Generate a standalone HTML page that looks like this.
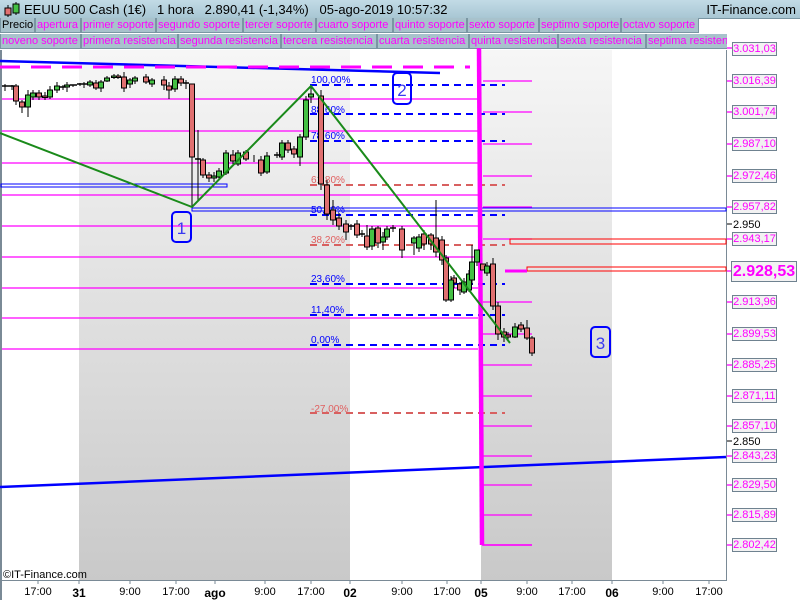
<!DOCTYPE html>
<html><head><meta charset="utf-8"><style>
body{margin:0;width:800px;height:600px;overflow:hidden;background:#fff;font-family:"Liberation Sans",sans-serif}
#hdr{position:absolute;left:0;top:0;width:800px;height:18px;background:linear-gradient(#c2dbe6,#a8c6d3);border-bottom:1px solid #7a96a3}
#hdr .t{position:absolute;left:24px;top:2px;font-size:13px;color:#000;white-space:pre}
#hdr .r{position:absolute;right:4px;top:2px;font-size:13px}
.row{position:absolute;left:0;height:16px;font-size:11px;white-space:nowrap}
.row span{position:absolute;top:0;height:15px;line-height:15px;background:#a8c2cc;border:1px solid #7a96a3;border-top:none;color:#f0f;padding-left:1px;box-sizing:border-box}
.lab{position:absolute;left:732px;width:45px;height:14px;border:1px solid #6f8290;background:#f2f2f2;color:#f0f;font-size:11px;line-height:13px;text-align:center;box-sizing:border-box}
.ax{position:absolute;top:586px;font-size:11px;transform:translateX(-50%)}
.axb{font-weight:bold;font-size:12px}
</style></head><body>
<div id="hdr"><svg style="position:absolute;left:3px;top:1px" width="18" height="17"><line x1="5" y1="4" x2="5" y2="16" stroke="#000"/><rect x="2" y="7" width="6" height="7" fill="#e07070" stroke="#000"/><line x1="13" y1="1" x2="13" y2="14" stroke="#000"/><rect x="10" y="3" width="6" height="9" fill="#44c044" stroke="#000"/></svg><div class="t">EEUU 500 Cash (1€)   1 hora   2.890,41 (-1,34%)   05-ago-2019 10:57:32</div><div class="r">IT-Finance.com</div></div>
<div class="row" style="top:18px;width:800px">
<span style="left:0;width:35px;color:#000">Precio</span><span style="left:35px;width:46px">apertura</span><span style="left:81px;width:75px">primer soporte</span><span style="left:156px;width:87px">segundo soporte</span><span style="left:243px;width:73px">tercer soporte</span><span style="left:316px;width:77px">cuarto soporte</span><span style="left:393px;width:74px">quinto soporte</span><span style="left:467px;width:72px">sexto soporte</span><span style="left:539px;width:82px">septimo soporte</span><span style="left:621px;width:78px">octavo soporte</span></div>
<div class="row" style="top:34px;width:727px;overflow:hidden">
<span style="left:0;width:81px">noveno soporte</span><span style="left:81px;width:97px">primera resistencia</span><span style="left:178px;width:103px">segunda resistencia</span><span style="left:281px;width:96px">tercera resistencia</span><span style="left:377px;width:92px">cuarta resistencia</span><span style="left:469px;width:89px">quinta resistencia</span><span style="left:558px;width:88px">sexta resistencia</span><span style="left:646px;width:90px">septima resistencia</span></div>
<svg style="position:absolute;left:0;top:0" width="800" height="600">
<defs><linearGradient id="g" x1="0" y1="0" x2="0" y2="1"><stop offset="0" stop-color="#f6f6f6"/><stop offset="1" stop-color="#c9c9c9"/></linearGradient></defs>
<rect x="79" y="50" width="271" height="530" fill="url(#g)"/>
<rect x="481" y="50" width="131" height="530" fill="url(#g)"/>
<rect x="0" y="50" width="2" height="550" fill="#7a8a96"/>
<line x1="726.5" y1="50" x2="726.5" y2="580" stroke="#7a8a96"/>
<line x1="0" y1="580.5" x2="727" y2="580.5" stroke="#7a8a96"/>
<g stroke="#7a8a96">
<line x1="38" y1="580" x2="38" y2="584"/><line x1="79" y1="580" x2="79" y2="584"/><line x1="130" y1="580" x2="130" y2="584"/><line x1="176" y1="580" x2="176" y2="584"/><line x1="215" y1="580" x2="215" y2="584"/><line x1="265" y1="580" x2="265" y2="584"/><line x1="311" y1="580" x2="311" y2="584"/><line x1="350" y1="580" x2="350" y2="584"/><line x1="402" y1="580" x2="402" y2="584"/><line x1="447" y1="580" x2="447" y2="584"/><line x1="481" y1="580" x2="481" y2="584"/><line x1="527" y1="580" x2="527" y2="584"/><line x1="572" y1="580" x2="572" y2="584"/><line x1="612" y1="580" x2="612" y2="584"/><line x1="663" y1="580" x2="663" y2="584"/><line x1="709" y1="580" x2="709" y2="584"/>
</g>
<g stroke="#f0f" stroke-width="1.3">
<line x1="2" y1="99" x2="478" y2="99"/><line x1="2" y1="131" x2="478" y2="131"/><line x1="2" y1="163" x2="478" y2="163"/><line x1="2" y1="195" x2="478" y2="195"/><line x1="2" y1="226" x2="478" y2="226"/><line x1="2" y1="257" x2="478" y2="257"/><line x1="2" y1="288" x2="478" y2="288"/><line x1="2" y1="318" x2="478" y2="318"/><line x1="2" y1="349" x2="478" y2="349"/>
<line x1="483" y1="81" x2="532" y2="81"/><line x1="483" y1="112" x2="532" y2="112"/><line x1="483" y1="144" x2="532" y2="144"/><line x1="483" y1="176" x2="532" y2="176"/><line x1="483" y1="207" x2="532" y2="207"/><line x1="483" y1="239" x2="532" y2="239"/><line x1="483" y1="302" x2="532" y2="302"/><line x1="483" y1="334" x2="532" y2="334"/><line x1="483" y1="365" x2="532" y2="365"/><line x1="483" y1="396" x2="532" y2="396"/><line x1="483" y1="426" x2="532" y2="426"/><line x1="483" y1="456" x2="532" y2="456"/><line x1="483" y1="485" x2="532" y2="485"/><line x1="483" y1="515" x2="532" y2="515"/><line x1="483" y1="545" x2="532" y2="545"/>
<line x1="727" y1="48" x2="732" y2="48"/><line x1="727" y1="81" x2="732" y2="81"/><line x1="727" y1="112" x2="732" y2="112"/><line x1="727" y1="144" x2="732" y2="144"/><line x1="727" y1="176" x2="732" y2="176"/><line x1="727" y1="207" x2="732" y2="207"/><line x1="727" y1="239" x2="732" y2="239"/><line x1="727" y1="271" x2="732" y2="271"/><line x1="727" y1="302" x2="732" y2="302"/><line x1="727" y1="334" x2="732" y2="334"/><line x1="727" y1="365" x2="732" y2="365"/><line x1="727" y1="396" x2="732" y2="396"/><line x1="727" y1="426" x2="732" y2="426"/><line x1="727" y1="456" x2="732" y2="456"/><line x1="727" y1="485" x2="732" y2="485"/><line x1="727" y1="515" x2="732" y2="515"/><line x1="727" y1="545" x2="732" y2="545"/>
</g>
<g stroke="#000"><line x1="727" y1="224" x2="732" y2="224"/><line x1="727" y1="441" x2="732" y2="441"/></g>
<g stroke-width="2" stroke-dasharray="7,5">
<line x1="310" y1="85" x2="505" y2="85" stroke="#00f"/><line x1="310" y1="114" x2="505" y2="114" stroke="#00f"/><line x1="310" y1="141" x2="505" y2="141" stroke="#00f"/><line x1="310" y1="185" x2="505" y2="185" stroke="#d86060"/><line x1="310" y1="215" x2="505" y2="215" stroke="#00f"/><line x1="310" y1="245" x2="505" y2="245" stroke="#d86060"/><line x1="310" y1="284" x2="505" y2="284" stroke="#00f"/><line x1="310" y1="315" x2="505" y2="315" stroke="#00f"/><line x1="310" y1="345" x2="505" y2="345" stroke="#00f"/><line x1="310" y1="413" x2="505" y2="413" stroke="#d86060"/>
</g>
<g font-size="10" font-family="Liberation Sans,sans-serif">
<text x="311" y="83" fill="#00f">100,00%</text><text x="311" y="113" fill="#00f">88,60%</text><text x="311" y="139" fill="#00f">78,60%</text><text x="311" y="183" fill="#e06060">61,80%</text><text x="311" y="213" fill="#00f">50,00%</text><text x="311" y="243" fill="#e06060">38,20%</text><text x="311" y="282" fill="#00f">23,60%</text><text x="311" y="313" fill="#00f">11,40%</text><text x="311" y="343" fill="#00f">0,00%</text><text x="311" y="412" fill="#e06060">-27,00%</text>
</g>
<line x1="0" y1="61" x2="440" y2="73" stroke="#00f" stroke-width="2.5"/>
<line x1="0" y1="67" x2="470" y2="67" stroke="#f0f" stroke-width="3" stroke-dasharray="20,11"/>
<line x1="0" y1="487" x2="726" y2="457" stroke="#00f" stroke-width="2.5"/>
<rect x="1" y="184" width="226" height="3" fill="none" stroke="#00f" stroke-width="1"/>
<rect x="192" y="208" width="534" height="3" fill="none" stroke="#00f" stroke-width="1"/>
<rect x="510" y="239" width="216" height="5" fill="none" stroke="#f00" stroke-width="1"/>
<rect x="527" y="267" width="199" height="4" fill="none" stroke="#f00" stroke-width="1"/>
<line x1="505" y1="271" x2="527" y2="271" stroke="#f0f" stroke-width="3"/>
<line x1="479" y1="48" x2="482" y2="545" stroke="#f0f" stroke-width="4.5"/>
<line x1="482" y1="545" x2="532" y2="545" stroke="#f0f" stroke-width="1.5"/>
<g stroke="#000" stroke-width="1">
<path d="M5 84V91M12 85V90M16 84V105M22 100V113M28 90V117M33 90V100M39 90V100M45 92V100M50 86V99M57 82V93M63 85V90M67 82V92M73 85V87M80 83V86M84 82V88M90 80V87M96 80V90M101 80V92M107 76V82M114 74V79M118 74V79M124 72V92M130 78V88M135 76V84M146 74V84M152 78V87M164 76V90M169 82V99M175 76V92M181 76V86M186 80V89M192 84V207M198 130V200M203 158V178M209 172V182M214 172V182M219 168V180M226 150V175M233 150V164M238 150V166M246 150V161M254 155V162M261 156V176M267 152V174M277 152V158M282 140V160M288 140V153M294 146V158M300 134V166M306 96V140M311 85V103M321 90V190M327 180V220M333 200V225M339 213V230M346 220V240M351 224V230M357 220V238M362 230V237M367 225V250M372 226V250M378 226V248M383 232V250M387 226V240M393 225V232M402 226V258M414 236V255M419 234V252M424 230V250M431 233V250M436 200V257M442 236V265M446 255V302M451 276V302M454 275V288M460 282V295M464 278V294M469 270V292M472 245V285M477 250V266M487 262V276M493 258V310M498 302V340M504 328V342M508 332V340M515 323V338M521 322V332M527 320V340M532 336V356"/>
</g>
<g stroke="#000" stroke-width="1" fill="#e07070">
<rect x="13.5" y="86" width="5" height="15"/><rect x="19.5" y="102" width="5" height="5"/><rect x="36.5" y="93" width="5" height="4"/><rect x="42.5" y="96" width="5" height="1.5"/><rect x="93.5" y="83" width="5" height="5"/><rect x="115.5" y="76" width="5" height="1.5"/><rect x="121.5" y="77" width="5" height="11"/><rect x="143.5" y="77" width="5" height="5"/><rect x="161.5" y="80" width="5" height="5"/><rect x="166.5" y="86" width="5" height="4"/><rect x="178.5" y="79" width="5" height="4"/><rect x="189.5" y="84" width="5" height="73"/><rect x="200.5" y="160" width="5" height="15"/><rect x="206.5" y="175" width="5" height="3"/><rect x="230.5" y="155" width="5" height="6"/><rect x="243.5" y="152" width="5" height="7"/><rect x="258.5" y="160" width="5" height="13"/><rect x="285.5" y="143" width="5" height="7"/><rect x="291.5" y="149" width="5" height="5"/><rect x="318.5" y="96" width="5" height="88"/><rect x="324.5" y="185" width="5" height="29"/><rect x="330.5" y="210" width="5" height="10"/><rect x="336.5" y="218" width="5" height="8"/><rect x="343.5" y="224" width="5" height="8"/><rect x="354.5" y="224" width="5" height="11"/><rect x="364.5" y="236" width="5" height="11"/><rect x="375.5" y="228" width="5" height="15"/><rect x="399.5" y="229" width="5" height="21"/><rect x="421.5" y="234" width="5" height="10"/><rect x="428.5" y="235" width="5" height="9"/><rect x="433.5" y="238" width="5" height="14"/><rect x="439.5" y="240" width="5" height="20"/><rect x="443.5" y="258" width="5" height="42"/><rect x="451.5" y="278" width="5" height="5"/><rect x="457.5" y="284" width="5" height="6"/><rect x="480.5" y="264" width="5" height="6"/><rect x="490.5" y="264" width="5" height="42"/><rect x="495.5" y="306" width="5" height="28"/><rect x="501.5" y="332" width="5" height="5"/><rect x="505.5" y="335" width="5" height="2"/><rect x="518.5" y="325" width="5" height="4"/><rect x="524.5" y="328" width="5" height="10"/><rect x="529.5" y="338" width="5" height="15"/>
</g>
<g stroke="#000" stroke-width="1" fill="#44c044">
<rect x="25.5" y="95" width="5" height="12"/><rect x="30.5" y="93" width="5" height="4"/><rect x="47.5" y="90" width="5" height="7"/><rect x="54.5" y="86" width="5" height="4"/><rect x="64.5" y="85" width="5" height="2"/><rect x="87.5" y="82" width="5" height="3"/><rect x="98.5" y="82" width="5" height="6"/><rect x="104.5" y="78" width="5" height="3"/><rect x="111.5" y="76" width="5" height="1.5"/><rect x="127.5" y="80" width="5" height="4"/><rect x="132.5" y="78" width="5" height="3"/><rect x="149.5" y="80" width="5" height="4"/><rect x="172.5" y="79" width="5" height="10"/><rect x="211.5" y="176" width="5" height="2"/><rect x="216.5" y="171" width="5" height="6"/><rect x="223.5" y="153" width="5" height="20"/><rect x="235.5" y="153" width="5" height="11"/><rect x="264.5" y="156" width="5" height="16"/><rect x="279.5" y="143" width="5" height="14"/><rect x="297.5" y="137" width="5" height="20"/><rect x="303.5" y="100" width="5" height="37"/><rect x="308.5" y="94" width="5" height="3"/><rect x="369.5" y="229" width="5" height="17"/><rect x="380.5" y="237" width="5" height="5"/><rect x="384.5" y="229" width="5" height="8"/><rect x="411.5" y="238" width="5" height="5"/><rect x="416.5" y="237" width="5" height="11"/><rect x="448.5" y="280" width="5" height="20"/><rect x="461.5" y="282" width="5" height="10"/><rect x="466.5" y="274" width="5" height="16"/><rect x="469.5" y="262" width="5" height="18"/><rect x="474.5" y="250" width="5" height="12"/><rect x="484.5" y="266" width="5" height="7"/><rect x="512.5" y="327" width="5" height="10"/>
</g>
<g stroke="#000" stroke-width="1.5"><path d="M2 86H9M9 86H15M59 87H66M70 85H77M77 84H84M82 84H88M183 83H189M195 159H201M274 155H281M348 226H354M359 234H365M390 228H396"/></g>
<polyline points="0,133 192,207 311,86 510,343" fill="none" stroke="#1a8a1a" stroke-width="2"/>
<g fill="none" stroke="#00f" stroke-width="2"><rect x="172" y="212" width="19" height="30" rx="4"/><rect x="393" y="73" width="18" height="31" rx="4"/><rect x="591" y="327" width="19" height="30" rx="4"/></g>
<g fill="#3a3af0" font-size="17" font-family="Liberation Sans,sans-serif" text-anchor="middle"><text x="181.5" y="234">1</text><text x="402" y="96">2</text><text x="600.5" y="349">3</text></g>
<text x="3" y="578" font-size="11" font-family="Liberation Sans,sans-serif">©IT-Finance.com</text>
<text x="733" y="445" font-size="11" font-family="Liberation Sans,sans-serif">2.850</text>
<text x="733" y="228" font-size="11" font-family="Liberation Sans,sans-serif">2.950</text>
</svg>
<div class="lab" style="top:42px">3.031,03</div><div class="lab" style="top:74px">3.016,39</div><div class="lab" style="top:105px">3.001,74</div><div class="lab" style="top:137px">2.987,10</div><div class="lab" style="top:169px">2.972,46</div><div class="lab" style="top:200px">2.957,82</div><div class="lab" style="top:232px">2.943,17</div>
<div class="lab" style="top:261px;left:731px;width:66px;height:21px;font-size:16px;font-weight:bold;line-height:19px">2.928,53</div>
<div class="lab" style="top:295px">2.913,96</div><div class="lab" style="top:327px">2.899,53</div><div class="lab" style="top:358px">2.885,25</div><div class="lab" style="top:389px">2.871,11</div><div class="lab" style="top:419px">2.857,10</div><div class="lab" style="top:449px">2.843,23</div><div class="lab" style="top:478px">2.829,50</div><div class="lab" style="top:508px">2.815,89</div><div class="lab" style="top:538px">2.802,42</div>
<div class="ax" style="left:38px">17:00</div><div class="ax axb" style="left:79px">31</div><div class="ax" style="left:130px">9:00</div><div class="ax" style="left:176px">17:00</div><div class="ax axb" style="left:215px">ago</div><div class="ax" style="left:265px">9:00</div><div class="ax" style="left:311px">17:00</div><div class="ax axb" style="left:350px">02</div><div class="ax" style="left:402px">9:00</div><div class="ax" style="left:447px">17:00</div><div class="ax axb" style="left:481px">05</div><div class="ax" style="left:527px">9:00</div><div class="ax" style="left:572px">17:00</div><div class="ax axb" style="left:612px">06</div><div class="ax" style="left:663px">9:00</div><div class="ax" style="left:709px">17:00</div>
</body></html>
